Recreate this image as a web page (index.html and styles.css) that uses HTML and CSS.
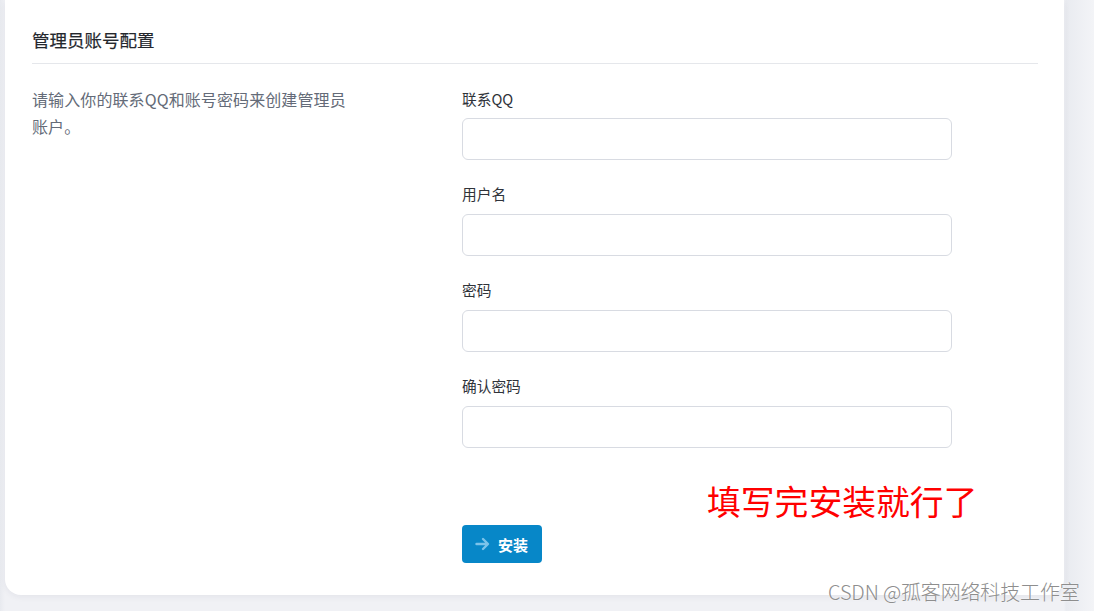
FILE: index.html
```html
<!DOCTYPE html>
<html lang="zh-CN">
<head>
<meta charset="utf-8">
<title>管理员账号配置</title>
<link rel="stylesheet" href="styles.css">
</head>
<body>
<div class="page">
  <div class="card">
    <h2 class="card-title">管理员账号配置</h2>
    <div class="form-row">
      <p class="desc">请输入你的联系QQ和账号密码来创建管理员账户。</p>
      <div class="fields">
        <div class="field">
          <label class="label">联系QQ</label>
          <input class="input" type="text">
        </div>
        <div class="field">
          <label class="label">用户名</label>
          <input class="input" type="text">
        </div>
        <div class="field">
          <label class="label">密码</label>
          <input class="input" type="password">
        </div>
        <div class="field">
          <label class="label">确认密码</label>
          <input class="input" type="password">
        </div>
        <button class="btn" type="button">
          <svg class="btn-icon" width="15" height="14" viewBox="0 0 15 14" fill="none" stroke="currentColor" stroke-width="2.4" stroke-linecap="round" stroke-linejoin="round"><path d="M1.5 7h11M8 2l5 5-5 5"/></svg>
          <span>安装</span>
        </button>
      </div>
    </div>
    <div class="annotation">填写完安装就行了</div>
  </div>
  <div class="watermark">CSDN @孤客网络科技工作室</div>
</div>
</body>
</html>
```

FILE: styles.css
```css
html, body {
  margin: 0;
  padding: 0;
}
body {
  background: #eef0f4;
  font-family: "Noto Sans CJK SC", "Noto Sans", sans-serif;
  width: 1094px;
  height: 611px;
  overflow: hidden;
}
.page {
  position: relative;
  height: 611px;
  padding: 0 30px 0 5px;
  box-sizing: border-box;
  background: linear-gradient(to right, #e8eaef 0, #f0f1f5 5px, #f0f1f5 1064px, #e9ebf0 1066px, #f3f4f7 1094px);
}
.card {
  position: relative;
  background: #ffffff;
  border-radius: 0 0 16px 16px;
  box-shadow: 0 2px 6px rgba(30, 40, 70, 0.06);
  padding: 28px 26px 32px 27px;
  height: 595px;
  box-sizing: border-box;
}
.card-title {
  margin: 0;
  font-size: 17.5px;
  line-height: 24px;
  font-weight: 400;
  color: #24272d;
  padding-bottom: 11px;
  border-bottom: 1px solid #e5e7eb;
  -webkit-text-stroke: 0.2px #24272d;
}
.form-row {
  display: flex;
  padding-top: 22px;
}
.desc {
  margin: 0;
  width: 325px;
  flex: none;
  margin-right: 105px;
  font-size: 16px;
  line-height: 27px;
  letter-spacing: 0.1px;
  color: #646b78;
}
.fields {
  display: flex;
  flex-direction: column;
  width: 490px;
  padding-top: 3px;
}
.field {
  display: flex;
  flex-direction: column;
  margin-bottom: 26px;
}
.label {
  font-size: 14.7px;
  line-height: 20px;
  color: #2f333a;
  margin-bottom: 9px;
}
.field + .field .label {
  margin-top: -2px;
  margin-bottom: 10px;
}
.input {
  height: 42px;
  box-sizing: border-box;
  border: 1px solid #d8dbe2;
  border-radius: 6px;
  background: #fff;
  padding: 0 12px;
  font: inherit;
}
.btn {
  align-self: flex-start;
  margin-top: 51px;
  display: flex;
  align-items: center;
  gap: 8px;
  width: 80px;
  height: 38px;
  padding: 0 0 0 13px;
  border: none;
  border-radius: 4px;
  background: #0787c8;
  color: #ffffff;
  font-family: "Noto Sans CJK SC", sans-serif;
  font-size: 15px;
  font-weight: 700;
  box-sizing: border-box;
}
.btn-icon {
  color: #7cc3ea;
  flex: none;
}
.annotation {
  position: absolute;
  left: 702px;
  top: 481px;
  font-family: "Noto Sans CJK SC", sans-serif;
  font-size: 33.8px;
  line-height: 40px;
  color: #ff0000;
  white-space: nowrap;
}
.watermark {
  position: absolute;
  left: 828px;
  top: 579px;
  font-family: "Noto Sans CJK SC", sans-serif;
  font-weight: 300;
  font-size: 20px;
  line-height: 26px;
  letter-spacing: -0.15px;
  color: #8e8e8e;
  white-space: nowrap;
  text-shadow: 0 0 2px rgba(255,255,255,0.8);
}
```
